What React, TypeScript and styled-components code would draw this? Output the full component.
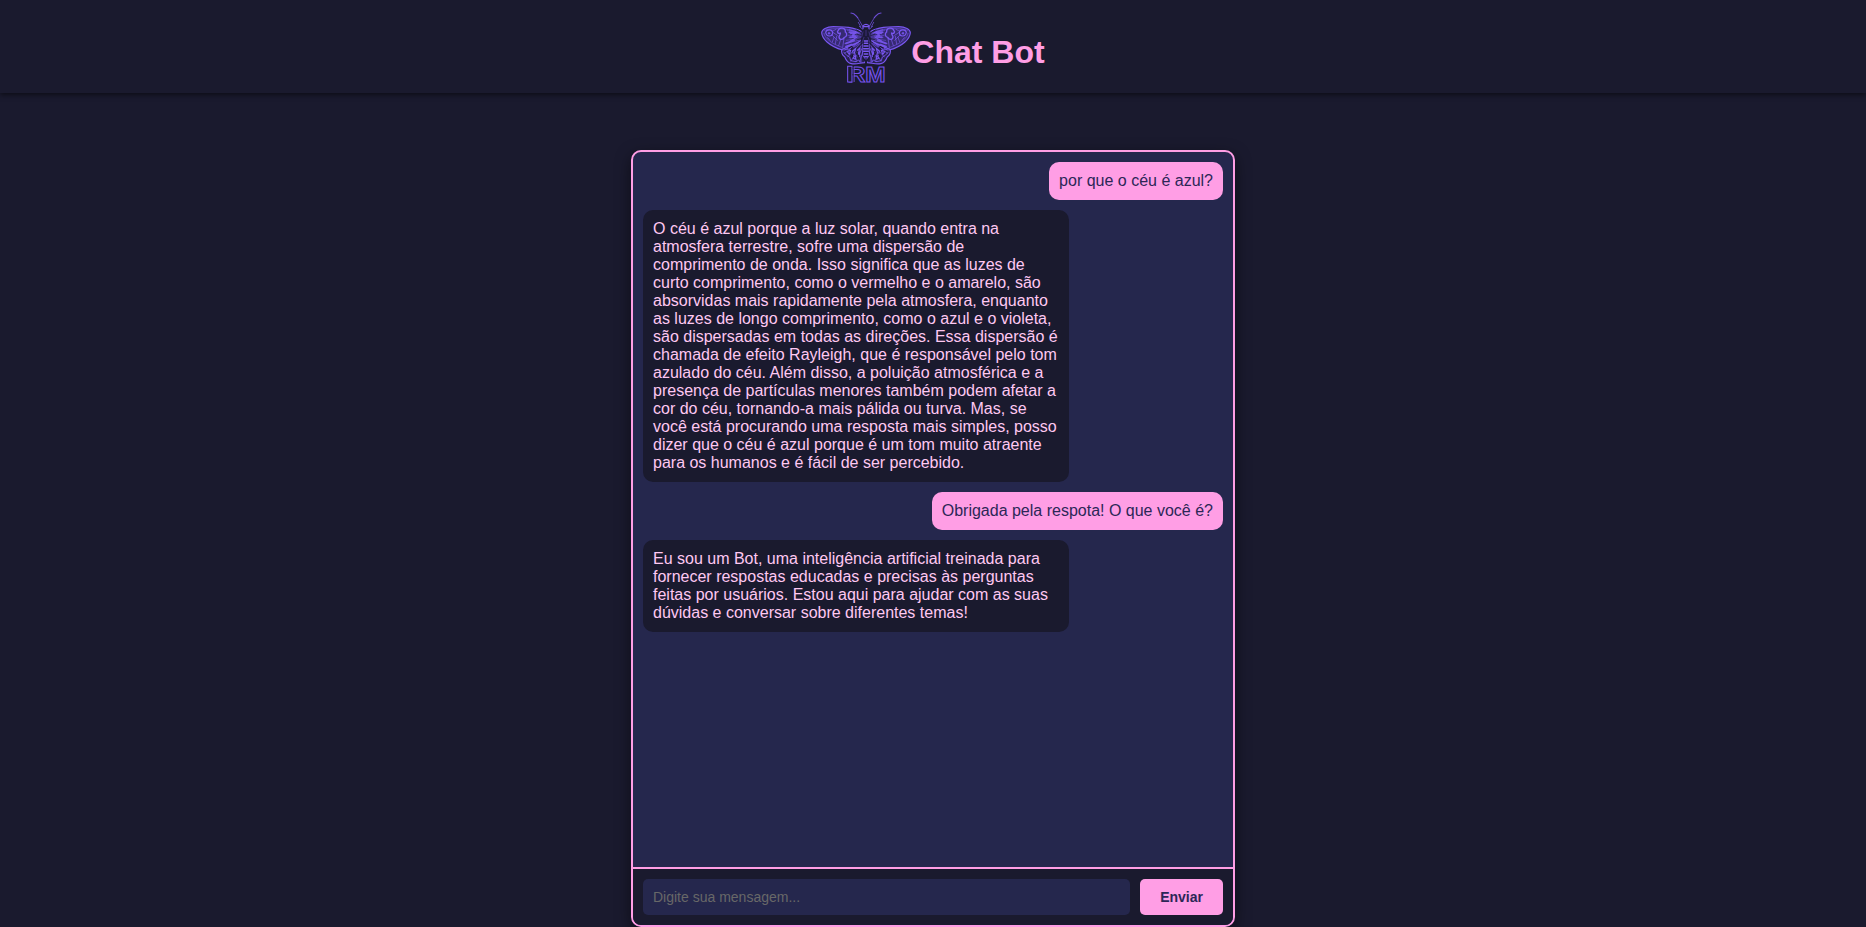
import React from "react";
import styled, { createGlobalStyle } from "styled-components";

const GlobalStyle = createGlobalStyle`
  * { box-sizing: border-box; }
  html, body { margin: 0; padding: 0; }
  body {
    background: #1a1a2e;
    font-family: "Liberation Sans", Arial, sans-serif;
  }
`;

const Page = styled.div`
  height: 927px;
  display: flex;
  flex-direction: column;
  align-items: center;
  overflow: hidden;
`;

const Header = styled.header`
  width: 100%;
  height: 93px;
  padding: 10px;
  display: flex;
  justify-content: center;
  align-items: flex-start;
  background: #1a1a2e;
  box-shadow: 0 2px 5px rgba(0, 0, 0, 0.5);
`;

const Logo = styled.svg`
  width: 90px;
  height: 74px;
  flex: none;
  overflow: visible;
`;

const LogoText = styled.text`
  font-family: "Liberation Sans", sans-serif;
  font-weight: bold;
  font-size: 68px;
`;

const Title = styled.h1`
  margin: 24px 0 0;
  font-size: 32px;
  line-height: 37px;
  color: #ff9ee5;
`;

const Chat = styled.main`
  width: 604px;
  height: 777px;
  margin-top: 57px;
  display: flex;
  flex-direction: column;
  border: 2px solid #ff9ee5;
  border-radius: 10px;
  background: #25274d;
  box-shadow: 0 5px 15px rgba(0, 0, 0, 0.5);
`;

const Messages = styled.div`
  flex: 1;
  padding: 10px;
  display: flex;
  flex-direction: column;
  gap: 10px;
`;

const Message = styled.div<{ $own?: boolean }>`
  max-width: 426px;
  padding: 10px;
  border-radius: 10px;
  font-size: 16px;
  line-height: 18px;
  align-self: ${(p) => (p.$own ? "flex-end" : "flex-start")};
  background: ${(p) => (p.$own ? "#ff9ee5" : "#1a1a2e")};
  color: ${(p) => (p.$own ? "#2c2757" : "#ffc8f2")};
`;

const Composer = styled.form`
  display: flex;
  gap: 10px;
  padding: 10px;
  border-top: 2px solid #ff9ee5;
  border-radius: 0 0 8px 8px;
  background: #1a1a2e;
`;

const Field = styled.input`
  flex: 1;
  min-width: 0;
  height: 36px;
  padding: 10px;
  border: none;
  border-radius: 5px;
  background: #25274d;
  color: #ffc8f2;
  font: 14px "Liberation Sans", Arial, sans-serif;
  &::placeholder { color: #686868; }
`;

const Send = styled.button`
  height: 36px;
  padding: 0 20px;
  border: none;
  border-radius: 5px;
  background: #ff9ee5;
  color: #2c2757;
  font: bold 14px "Liberation Sans", Arial, sans-serif;
`;

const Wing = () => (
  <g fill="none" stroke="#7a57f2" strokeLinecap="round" strokeLinejoin="round">
    <path d="M158 98C146 86 110 80 70 80C50 80 35 88 35 98C36 116 58 139 98 150C116 150 140 140 160 118Z" fill="#4a35a0" fillOpacity=".6" strokeWidth="3.4" />
    <path d="M96 148C92 156 97 166 104 170C108 180 112 189 124 191C142 194 150 188 164 188V116C142 128 120 140 96 148Z" fill="#38297a" fillOpacity=".45" strokeWidth="3.4" />
    <path d="M42 100C44 114 65 131 96 142M44 91C59 84 98 85 124 90" strokeWidth="1.6" strokeDasharray="5 2" />
    <path d="M47 97C49 88 66 86 68 98C67 111 50 112 47 97Z" strokeWidth="3.4" />
    <circle cx="57" cy="100" r="3" fill="#7552ec" />
    <path d="M84 92C88 81 108 82 106 96C113 100 110 112 103 112C98 122 87 119 87 110C89 105 92 102 91 99C84 102 80 96 84 92" strokeWidth="4" />
    <path d="M67 94L78 88M67 106L82 121M72 112L67 126M80 109L76 132M92 119L86 137M102 115L98 142M53 113L60 121M70 98L82 106" strokeWidth="2" />
    <path d="M112 91L154 99M116 97L155 104M114 106L156 107M117 112L154 111M109 121L153 115M104 131L150 120M110 139L145 127" strokeWidth="2" opacity=".75" />
    <path d="M118 90L134 93L148 101M121 101L142 98M121 123L142 111" strokeWidth="2.7" />
    <path d="M119 97L137 97L128 106L137 110L121 112M108 130L132 121M108 140L125 134" strokeWidth="6" opacity=".85" />
    <path d="M151 122L104 160M156 124L113 171M159 129L123 183M161 135L137 185M162 144L149 185M147 126L104 150" strokeWidth="2.1" />
    <path d="M101 156L110 166L119 171L122 182L138 185L146 180L152 187" strokeWidth="2.6" />
    <path d="M112 155L122 150L118 163ZM128 153L137 145L131 167ZM143 150L150 144L148 169ZM129 174L138 166L136 178Z" strokeWidth="3.4" />
    <path d="M123 148L129 142M140 161L142 154M125 172L130 162M143 176L146 166M116 144L126 139" strokeWidth="3.5" stroke="#19182f" />
    <path d="M140 90L161 103M143 104L162 108M143 118L162 114M147 129L162 120" strokeWidth="2.6" stroke="#1a1a2e" />
    <path d="M123 39C134 39 136 46 143 53" strokeWidth="3.5" opacity=".85" />
    <path d="M143 53L158 79M145 67L152 80M148 79L157 87" strokeWidth="2.4" opacity=".85" />
  </g>
);

const Butterfly = () => (
  <Logo viewBox="33 30 270 222" aria-label="RM">
    <Wing />
    <g transform="translate(336 0) scale(-1 1)"><Wing /></g>
    <path d="M155 92Q168 82 181 92L184 128L176 152L178 176L168 191L158 176L160 152L152 128Z" fill="#1c193a" />
    <g fill="none" stroke="#7a57f2" strokeLinecap="round">
      <path d="M159 86V77Q168 69 177 77V86M162 80H174" strokeWidth="3.4" />
      <path d="M159 96L155 111M168 91V107M177 96L181 111M162 112L156 128M174 112L180 128" strokeWidth="1.6" opacity=".65" />
      <path d="M163 123H173M163 130H173M162 138H174M161 146H175M161 154H175M163 162H173M164 170H172" strokeWidth="4.5" />
      <path d="M158 132V166L166 177M178 132V166L170 177M153 166V185M183 166V185" strokeWidth="2.3" />
    </g>
    <g fill="#1a1a2e" stroke="#7552ec" strokeWidth="3.2">
      <LogoText x="113" y="246" textLength="114" lengthAdjust="spacingAndGlyphs">RM</LogoText>
      <path d="M113 199H126V246H113Z" />
    </g>
    <path d="M129.500 196V250" stroke="#1a1a2e" strokeWidth="3.6" />
    <path d="M132.500 201V246" stroke="#7552ec" strokeWidth="2.4" />
  </Logo>
);

export default function App() {
  return (
    <>
      <GlobalStyle />
      <Page>
        <Header>
          <Butterfly />
          <Title>Chat Bot</Title>
        </Header>
        <Chat>
          <Messages>
            <Message $own>por que o céu é azul?</Message>
            <Message>
              O céu é azul porque a luz solar, quando entra na atmosfera terrestre, sofre uma dispersão de
              comprimento de onda. Isso significa que as luzes de curto comprimento, como o vermelho e o
              amarelo, são absorvidas mais rapidamente pela atmosfera, enquanto as luzes de longo
              comprimento, como o azul e o violeta, são dispersadas em todas as direções. Essa dispersão é
              chamada de efeito Rayleigh, que é responsável pelo tom azulado do céu. Além disso, a poluição
              atmosférica e a presença de partículas menores também podem afetar a cor do céu, tornando-a
              mais pálida ou turva. Mas, se você está procurando uma resposta mais simples, posso dizer que
              o céu é azul porque é um tom muito atraente para os humanos e é fácil de ser percebido.
            </Message>
            <Message $own>Obrigada pela respota! O que você é?</Message>
            <Message>
              Eu sou um Bot, uma inteligência artificial treinada para fornecer respostas educadas e
              precisas às perguntas feitas por usuários. Estou aqui para ajudar com as suas dúvidas e
              conversar sobre diferentes temas!
            </Message>
          </Messages>
          <Composer onSubmit={(e) => e.preventDefault()}>
            <Field placeholder="Digite sua mensagem..." />
            <Send>Enviar</Send>
          </Composer>
        </Chat>
      </Page>
    </>
  );
}
